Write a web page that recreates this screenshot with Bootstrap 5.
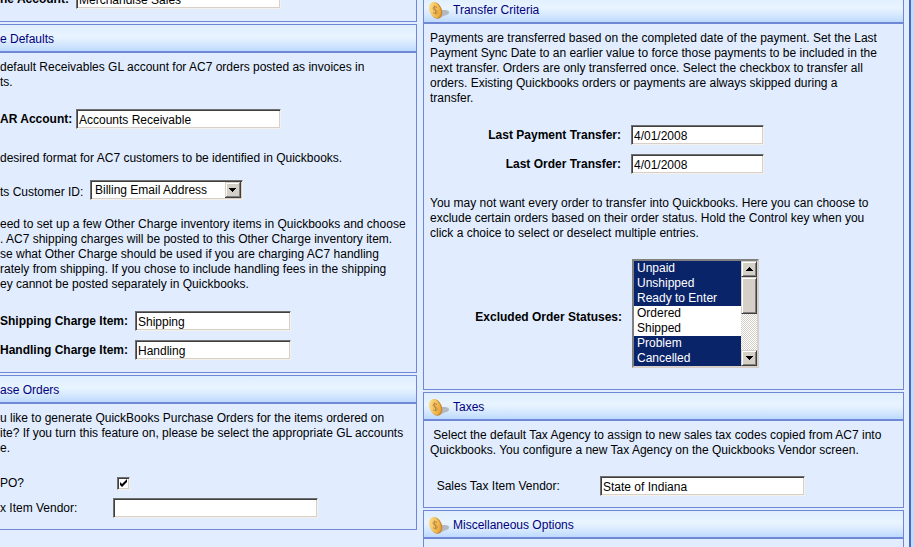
<!DOCTYPE html>
<html lang="en">
<head>
<meta charset="utf-8">
<meta name="viewport" content="width=device-width, initial-scale=1">
<title>QuickBooks Transfer Settings</title>
<link href="https://cdn.jsdelivr.net/npm/bootstrap@5.3.0/dist/css/bootstrap.min.css" rel="stylesheet">
<style>
body{font:12px/15px "Liberation Sans",Arial,sans-serif;color:#000;background:#e2eeff;overflow:hidden}
.cols{gap:6px;padding-right:5px;border-right:2px solid #4a68b8}
.rail{flex:0 0 3px;background:#bfdcff}
.col-left{flex:417 1 0;margin-top:-18px;min-width:0}
.col-right{flex:481 1 0;margin-top:-5px;min-width:0}
.stack{display:flex;flex-direction:column;gap:2px}
.panel{border:1px solid #6f88d6;background:#e1edff}
.col-left .panel{border-left:0}
.panel-head{height:28px;padding-top:3px;border-bottom:2px solid #6f88d6;background:linear-gradient(#dfeeff,#e8f4ff 45%,#dcecff 65%,#bedaff);color:#00007c;font-size:12px;line-height:15px;font-weight:400;margin:0}
.col-right .panel-head{padding-left:4px;gap:3px}
.panel-body{padding-top:7px}
.panel-first{padding-top:6px}
.col-right .panel-body{padding-left:6px}
p{margin-bottom:0;white-space:nowrap}
label{white-space:nowrap;padding-top:1px}
.w-ar{width:76px}.w-cust{width:90px}.w-item{width:135px}.w-po{width:113px}.w-date{width:201px}.w-status{width:202px}.w-tax{width:170px}
.field{height:20px;padding:1px 0 0 2px;border:1px solid;border-color:#707070 #f4f0ea #f4f0ea #707070;box-shadow:inset 1px 1px #404040,inset -1px -1px #d8d0c8;background:#fff;color:#000;border-radius:0;font-size:12px;line-height:15px;outline:0}
.f-lg{width:205px}.f-md{width:156px}.f-sm{width:133px}
.pick{width:153px;height:20px;padding:0 18px 0 4px;appearance:none;background:#fff url("data:image/svg+xml,%3Csvg xmlns='http://www.w3.org/2000/svg' width='16' height='16'%3E%3Cpath fill='%23d4d0c8' d='M0 0h16v16H0z'/%3E%3Cpath fill='%23fff' d='M1 1h13v1H2v12H1z'/%3E%3Cpath fill='%23808080' d='M14 1h1v14H1v-1h13z'/%3E%3Cpath fill='%23404040' d='M15 0h1v16H0v-1h15z'/%3E%3Cpath d='M4 6h7v1h-1v1H9v1H8v1H7V9H6V8H5V7H4z'/%3E%3C/svg%3E") right 1px center no-repeat}
.tick{appearance:none;width:13px;height:13px;margin:0 0 0 4px;border:1px solid;border-color:#707070 #f4f0ea #f4f0ea #707070;box-shadow:inset 1px 1px #404040,inset -1px -1px #d8d0c8;background:#fff}
.tick:checked{background:#fff url("data:image/svg+xml,%3Csvg xmlns='http://www.w3.org/2000/svg' width='11' height='11'%3E%3Cpath d='M2 4v3l2 2 5-5V1L4 6z'/%3E%3C/svg%3E") center no-repeat}
.listing-box{width:127px;height:109px;border:2px solid;border-color:#808080 #d8d0c8 #d8d0c8 #808080;background:#fff}
.listing{flex:1 1 0;min-width:0;height:105px;padding:0;border:0;background:#fff;border-radius:0;font-size:12px;line-height:15px;outline:0;color:#000;scrollbar-width:none}
.listing::-webkit-scrollbar{display:none}
.listing option{padding:0 0 0 3px;height:15px;min-height:15px;line-height:15px;color:#000}
.listing option:checked{background:#0a246a linear-gradient(#0a246a,#0a246a);color:#fff}
.scroller{width:16px;background:repeating-conic-gradient(#fff 0 25%,#d4d0c8 0 50%) 0 0/2px 2px}
.scroll-btn,.scroll-thumb{background:#d4d0c8;border:1px solid;border-color:#d4d0c8 #404040 #404040 #d4d0c8;box-shadow:inset 1px 1px #fff,inset -1px -1px #808080;padding:0;width:16px}
.scroll-btn{height:16px}
.scroll-thumb{height:37px}
.end-10{padding-right:10px}.end-8{padding-right:8px}
.gap-7{margin-top:7px}.gap-9{margin-top:9px}.gap-14{margin-top:14px}.gap-17{margin-top:17px}.gap-18{margin-top:18px}.gap-19{margin-top:19px}.gap-22{margin-top:22px}
.foot-11{padding-bottom:11px}.foot-12{padding-bottom:12px}.foot-21{padding-bottom:21px}
</style>
<script src="https://cdn.jsdelivr.net/npm/bootstrap@5.3.0/dist/js/bootstrap.bundle.min.js"></script>
</head>
<body>
<svg width="0" height="0" class="d-block" aria-hidden="true">
  <defs>
    <linearGradient id="gold" x1="0" x2="1" y1="0" y2="1"><stop offset="0" stop-color="#ffe69a"/><stop offset=".55" stop-color="#f4bf55"/><stop offset="1" stop-color="#dc9830"/></linearGradient>
    <symbol id="coin" viewBox="0 0 22 19">
      <path d="M12 9.500c3-1 8.500-.5 9 1.500s-2 3-4 3.500-4 2.500-6 2.500z" fill="#b4b8c2"/>
      <ellipse cx="8" cy="9.500" rx="5.900" ry="8.500" fill="#c98a2c" transform="rotate(-22 8 9.500)"/>
      <ellipse cx="7" cy="9" rx="5.500" ry="8.200" fill="url(#gold)" transform="rotate(-22 7 9)"/>
      <path d="M9 6.500C7.700 5.300 5 5.600 5 7.300c0 2 4 1.300 4.200 3.500.1 2-2.700 2.300-4.200.8M6.200 4.500l1.800 9" fill="none" stroke="#b98545"/>
    </symbol>
  </defs>
</svg>
<div class="d-flex vh-100 overflow-hidden">
<main class="cols d-flex flex-fill">
  <div class="col-left stack">
    <section class="panel">
      <div class="panel-body panel-first foot-12">
        <div class="d-flex align-items-center">
          <label class="w-ar fw-bold" for="income">ne Account:</label>
          <input class="field f-lg" id="income" value="Merchandise Sales">
        </div>
      </div>
    </section>
    <section class="panel">
      <h2 class="panel-head d-flex align-items-center">e Defaults</h2>
      <div class="panel-body foot-12">
        <p>default Receivables GL account for AC7 orders posted as invoices in<br>ts.</p>
        <div class="d-flex align-items-center gap-19">
          <label class="w-ar fw-bold" for="ar">AR Account:</label>
          <input class="field f-lg" id="ar" value="Accounts Receivable">
        </div>
        <p class="gap-22">desired format for AC7 customers to be identified in Quickbooks.</p>
        <div class="d-flex align-items-end gap-14">
          <label class="w-cust end-8 text-end" for="cust">ts Customer ID:</label>
          <select class="field pick" id="cust"><option>Billing Email Address</option></select>
        </div>
        <p class="gap-17">eed to set up a few Other Charge inventory items in Quickbooks and choose<br>. AC7 shipping charges will be posted to this Other Charge inventory item.<br>se what Other Charge should be used if you are charging AC7 handling<br>rately from shipping. If you chose to include handling fees in the shipping<br>ey cannot be posted separately in Quickbooks.</p>
        <div class="d-flex align-items-center gap-19">
          <label class="w-item fw-bold" for="ship">Shipping Charge Item:</label>
          <input class="field f-md" id="ship" value="Shipping">
        </div>
        <div class="d-flex align-items-center gap-9">
          <label class="w-item fw-bold" for="hand">Handling Charge Item:</label>
          <input class="field f-md" id="hand" value="Handling">
        </div>
      </div>
    </section>
    <section class="panel">
      <h2 class="panel-head d-flex align-items-center">ase Orders</h2>
      <div class="panel-body foot-11">
        <p>u like to generate QuickBooks Purchase Orders for the items ordered on<br>ite? If you turn this feature on, please be select the appropriate GL accounts<br>e.</p>
        <div class="d-flex align-items-center gap-19">
          <label class="w-po" for="po">PO?</label>
          <input class="tick" type="checkbox" id="po" checked>
        </div>
        <div class="d-flex align-items-center gap-7">
          <label class="w-po" for="vendor">x Item Vendor:</label>
          <input class="field f-lg" id="vendor" value="">
        </div>
      </div>
    </section>
  </div>
  <div class="col-right stack">
    <section class="panel">
      <h2 class="panel-head d-flex align-items-center"><svg width="22" height="19" aria-hidden="true"><use href="#coin"/></svg>Transfer Criteria</h2>
      <div class="panel-body foot-21">
        <p>Payments are transferred based on the completed date of the payment. Set the Last<br>Payment Sync Date to an earlier value to force those payments to be included in the<br>next transfer. Orders are only transferred once. Select the checkbox to transfer all<br>orders. Existing Quickbooks orders or payments are always skipped during a<br>transfer.</p>
        <div class="d-flex align-items-center gap-19">
          <label class="w-date end-10 fw-bold text-end" for="pay">Last Payment Transfer:</label>
          <input class="field f-sm" id="pay" value="4/01/2008">
        </div>
        <div class="d-flex align-items-center gap-9">
          <label class="w-date end-10 fw-bold text-end" for="ord">Last Order Transfer:</label>
          <input class="field f-sm" id="ord" value="4/01/2008">
        </div>
        <p class="gap-22">You may not want every order to transfer into Quickbooks. Here you can choose to<br>exclude certain orders based on their order status. Hold the Control key when you<br>click a choice to select or deselect multiple entries.</p>
        <div class="d-flex align-items-center gap-18">
          <label class="w-status end-10 fw-bold text-end pt-2" for="status">Excluded Order Statuses:</label>
          <div class="listing-box d-flex">
            <select class="listing" id="status" multiple size="7">
              <option selected>Unpaid</option><option selected>Unshipped</option><option selected>Ready to Enter</option><option>Ordered</option><option>Shipped</option><option selected>Problem</option><option selected>Cancelled</option>
            </select>
            <div class="scroller d-flex flex-column">
              <button type="button" class="scroll-btn d-flex align-items-center justify-content-center" aria-label="Scroll up"><svg width="7" height="4" aria-hidden="true"><path d="M0 4h7V3H6V2H5V1H4V0H3v1H2v1H1v1H0z"/></svg></button>
              <div class="scroll-thumb"></div>
              <button type="button" class="scroll-btn d-flex align-items-center justify-content-center mt-auto" aria-label="Scroll down"><svg width="7" height="4" aria-hidden="true"><path d="M0 0h7v1H6v1H5v1H4v1H3V3H2V2H1V1H0z"/></svg></button>
            </div>
          </div>
        </div>
      </div>
    </section>
    <section class="panel">
      <h2 class="panel-head d-flex align-items-center"><svg width="22" height="19" aria-hidden="true"><use href="#coin"/></svg>Taxes</h2>
      <div class="panel-body foot-11">
        <p>&nbsp;Select the default Tax Agency to assign to new sales tax codes copied from AC7 into<br>Quickbooks. You configure a new Tax Agency on the Quickbooks Vendor screen.</p>
        <div class="d-flex align-items-center gap-18">
          <label class="w-tax" for="tax">&nbsp; Sales Tax Item Vendor:</label>
          <input class="field f-lg" id="tax" value="State of Indiana">
        </div>
      </div>
    </section>
    <section class="panel">
      <h2 class="panel-head d-flex align-items-center"><svg width="22" height="19" aria-hidden="true"><use href="#coin"/></svg>Miscellaneous Options</h2>
      <div class="panel-body foot-21"></div>
    </section>
  </div>
</main>
<div class="rail"></div>
</div>
</body>
</html>
